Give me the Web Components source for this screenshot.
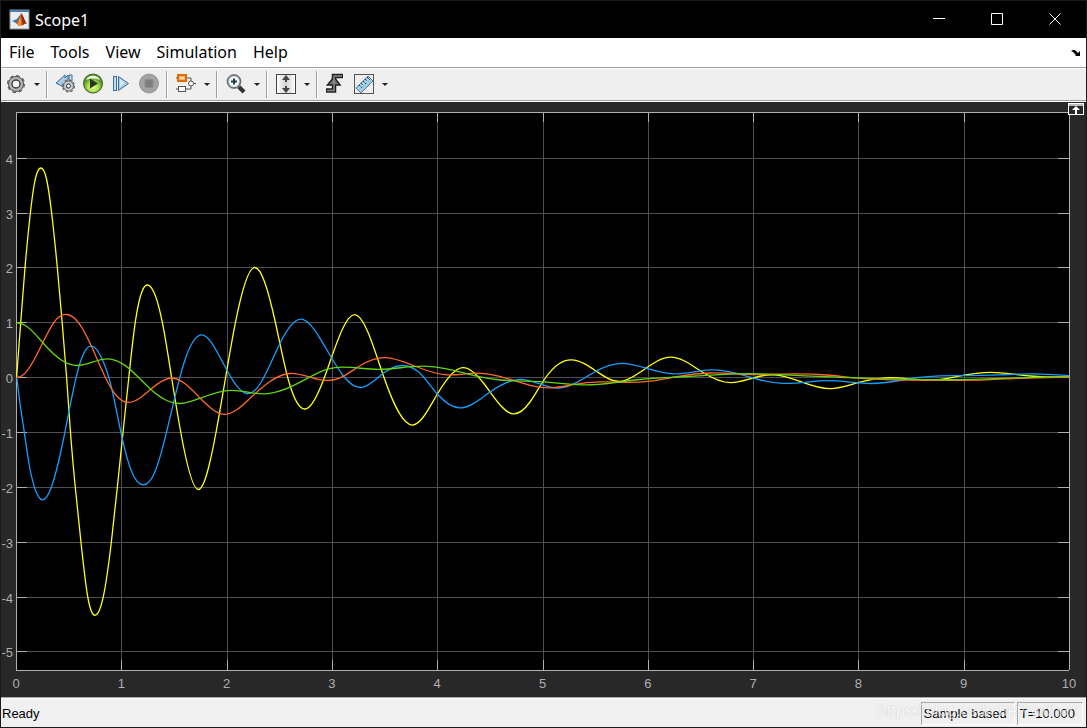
<!DOCTYPE html>
<html lang="en">
<head>
<meta charset="utf-8">
<title>Scope1</title>
<style>
html, body { height: 100%; margin: 0; }
body { background: #1a1a1a; }
</style>
</head>
<body>
<scope-window>
  <title-bar slot="title" label="Scope1"></title-bar>
  <menu-bar slot="menu"></menu-bar>
  <tool-bar slot="tools"></tool-bar>
  <scope-plot></scope-plot>
  <status-bar slot="status">Ready
    <status-cell slot="cells">Sample based</status-cell>
    <status-cell slot="cells">T=10.000</status-cell>
  </status-bar>
</scope-window>

<script>
const define = (name, html, setup) => {
  const template = document.createElement('template');
  template.innerHTML = html;
  customElements.define(name, class extends HTMLElement {
    constructor() {
      super();
      this.attachShadow({ mode: 'open' }).append(template.content.cloneNode(true));
    }
    connectedCallback() { if (setup) setup(this, this.shadowRoot); }
  });
};

const ICONS = {
  matlab: `<rect x="1" y="1" width="19" height="19" fill="#e9edf0" stroke="#8d969c"/><path d="M1 1h19v2H1z" fill="#4b7fae"/>
    <path d="M3 12l5-2 3-4 1 3-3 6-2-1z" fill="#3478a8"/><path d="M7 14l3-4 2-6c2 2 4 9 6 11-2-1-3 0-5 2l-1-1c-1 1-2 1-2 1z" fill="#d9541e"/><path d="M12 4c2 2 4 9 6 11-2-1-3 0-4 1z" fill="#8c2b12"/><path d="M11 8l1 5-1 4-2-2z" fill="#f7a531"/>`,
  gear: `<g fill="none" stroke="#555"><circle cx="11" cy="11" r="7.500" stroke-width="3" stroke-dasharray="3.200 2.690"/><circle cx="11" cy="11" r="6" stroke="#b4b4b4" stroke-width="4"/><circle cx="11" cy="11" r="7.500"/><circle cx="11" cy="11" r="4" stroke="#444" stroke-width="1.500"/></g><circle cx="11" cy="11" r="3" fill="#f5f5f5"/>`,
  back: `<path d="M2 10l9-8v3l3-3v14l-3-3v2z" fill="#a9cbe4" stroke="#3d6c93"/><path d="M15 2h3v8h-3z" fill="#bddcf0" stroke="#3d6c93"/><g fill="none"><circle cx="14.500" cy="13" r="5" stroke="#555" stroke-width="3" stroke-dasharray="2.200 1.700"/><circle cx="14.500" cy="13" r="4" stroke="#ccc" stroke-width="3"/><circle cx="14.500" cy="13" r="5" stroke="#666"/><circle cx="14.500" cy="13" r="2" stroke="#333" fill="#fff"/></g>`,
  play: `<defs><radialGradient id="g" cy=".7"><stop offset="0" stop-color="#e6ff8c"/><stop offset=".6" stop-color="#a5dc4e"/><stop offset="1" stop-color="#5b962c"/></radialGradient></defs><circle cx="11" cy="10.500" r="9.400" fill="url(#g)" stroke="#4d6f34" stroke-width="1.300"/><path d="M4 7a8 8 0 0 1 14 0 14 10 0 0 0-14 0z" fill="#eefadc"/><path d="M8 5.500v10l8-5z" fill="#2e3526"/>`,
  step: `<rect x="3.500" y="3.500" width="3" height="14" fill="#b9dcf1" stroke="#3f6f9a"/><path d="M8.500 3.500v14l10-7z" fill="#a7cde8" stroke="#3f6f9a"/><path d="M10 6v8l5-4z" fill="#d4eaf7"/>`,
  stop: `<circle cx="11" cy="10.500" r="9.500" fill="#a3a3a3" stroke="#979797"/><rect x="7" y="6.500" width="8" height="8" rx="1" fill="#7f7f7f" stroke="#8e8e8e"/>`,
  blocks: `<path d="M10 5h6v3M10 16h6v-3M1 5h2M1 16h2" fill="none" stroke="#555"/><path d="M3 2h8v6H3z" fill="#ffb266" stroke="#e56a05" stroke-width="2"/><path d="M5 4h4v2H5z" fill="#ffe0b5"/><rect x="3.500" y="13.500" width="7" height="5" fill="#fafafa" stroke="#555"/><circle cx="16" cy="10.500" r="2.500" fill="#fff" stroke="#555"/><path d="M19 10.500h2" stroke="#555"/>`,
  zoom: `<path d="M13 13l6 6" stroke="#333" stroke-width="4"/><circle cx="9" cy="8.500" r="6.500" fill="#d5e9ee" stroke="#999" stroke-width="2"/><circle cx="9" cy="8.500" r="6.500" fill="none" stroke="#666"/><circle cx="9" cy="8.500" r="4.500" fill="#f4fbfd"/><path d="M6 8.500h6M9 5.500v6" stroke="#223b4c" stroke-width="2"/>`,
  fit: `<defs><linearGradient id="f" x2="1"><stop stop-color="#fff"/><stop offset=".5" stop-color="#d4d4d4"/><stop offset="1" stop-color="#fff"/></linearGradient></defs><rect x="1.500" y="1.500" width="19" height="19" fill="url(#f)" stroke="#444"/><path d="M7 7l4-5 4 5h-3v2h-2V7zM7 15l4 5 4-5h-3v-2h-2v2z" fill="#444"/>`,
  trigger: `<path d="M2 17.500h8V3h9" fill="none" stroke="#222" stroke-width="4.500"/><path d="M3.500 12L10 4l6 8z" fill="#777" stroke="#222" stroke-width="1.500"/><path d="M3 17.500h7V3h8" fill="none" stroke="#888" stroke-width="1.500"/>`,
  ruler: `<rect x="1.500" y="1.500" width="19" height="19" fill="#eee" stroke="#555"/><path d="M3 15L15 3l5 5L8 20z" fill="#9dcbe4" stroke="#557f9b"/><path d="M8 10l2 2M10 8l3 3M12 6l2 2M14 4l3 3M6 12l3 3" stroke="#28506e"/><path d="M5 16l12-11" stroke="#d7effb" opacity=".6"/>`
};

define('scope-icon', `<style>
  :host { display: block; width: 22px; height: 22px; }
  svg { display: block; width: 100%; height: 100%; }
</style><svg viewBox="0 0 22 22" aria-hidden="true"></svg>`,
(el, root) => { root.querySelector('svg').innerHTML = ICONS[el.getAttribute('name')]; });

define('scope-window', `<style>
  :host { display: flex; flex-direction: column; box-sizing: border-box; height: 100%; border: 1px solid #1a1a1a; background: #282828; }
  .body { flex: 1; min-height: 0; display: flex; }
</style>
<slot name="title"></slot><slot name="menu"></slot><slot name="tools"></slot>
<div class="body"><slot></slot></div>
<slot name="status"></slot>`);

define('title-bar', `<style>
  :host { display: flex; align-items: center; height: 37px; padding-right: 2px; background: #000; color: #fff; font: 16px "Noto Sans", sans-serif; }
  scope-icon { margin: 0 4px 0 8px; }
  h1 { flex: 1; margin: 0; font: inherit; }
  button { width: 58px; height: 37px; padding: 0; border: 0; background: none; display: grid; place-items: center; }
  svg { width: 13px; height: 13px; display: block; fill: none; stroke: #fff; }
</style>
<scope-icon name="matlab"></scope-icon><h1></h1>
<button aria-label="Minimize"><svg viewBox="0 0 13 13"><path d="M0 5.500h12"/></svg></button>
<button aria-label="Maximize"><svg viewBox="0 0 13 13"><path d="M.5.5h11v11H.5z"/></svg></button>
<button aria-label="Close"><svg viewBox="0 0 13 13"><path d="M.5.5l11 11M11.500.5l-11 11"/></svg></button>`,
(el, root) => { root.querySelector('h1').textContent = el.getAttribute('label'); });

define('menu-bar', `<style>
  :host { display: flex; align-items: center; height: 29px; background: #fff; }
  nav { flex: 1; display: flex; }
  button { border: 0; padding: 0 8px; background: none; color: #000; font: 16px/29px "Noto Sans", sans-serif; }
  .dock { padding: 0 5px; display: grid; place-items: center; }
  svg { display: block; width: 10px; height: 8px; }
</style>
<nav><button>File</button><button>Tools</button><button>View</button><button>Simulation</button><button>Help</button></nav>
<button class="dock" aria-label="Dock"><svg viewBox="0 0 10 8"><path d="M0 2l2-1h2l3 3 2-2v5H4l1-1-3-3z"/></svg></button>`);

define('tool-bar', `<style>
  :host { display: flex; align-items: center; height: 32px; background: #efefef; border-top: 1px solid #a0a0a0; border-bottom: 1px solid #a0a0a0; box-shadow: inset 0 1px #fff, 0 1px #fff; margin-bottom: 1px; }
  .group { display: flex; padding: 0 3px; }
  .group:first-of-type { padding-left: 0; }
  .group + .group { border-left: 1px solid #a0a0a0; box-shadow: inset 1px 0 #fff; padding-left: 4px; }
  button { display: grid; place-items: center; width: 28px; height: 27px; padding: 0; border: 0; background: none; }
  button.wide { width: 30px; }
  button.more { width: 12px; }
  .more::before { content: ""; border: 3px solid transparent; border-top-color: #222; border-bottom: 0; }
</style>
<div class="group"><button class="wide" aria-label="Configuration"><scope-icon name="gear"></scope-icon></button><button class="more" aria-label="More configuration"></button></div>
<div class="group"><button aria-label="Step back"><scope-icon name="back"></scope-icon></button><button aria-label="Run"><scope-icon name="play"></scope-icon></button><button aria-label="Step forward"><scope-icon name="step"></scope-icon></button><button aria-label="Stop"><scope-icon name="stop"></scope-icon></button></div>
<div class="group"><button class="wide" aria-label="Highlight block"><scope-icon name="blocks"></scope-icon></button><button class="more" aria-label="More blocks"></button></div>
<div class="group"><button class="wide" aria-label="Zoom"><scope-icon name="zoom"></scope-icon></button><button class="more" aria-label="More zoom"></button></div>
<div class="group"><button class="wide" aria-label="Scale axes"><scope-icon name="fit"></scope-icon></button><button class="more" aria-label="More scaling"></button></div>
<div class="group"><button aria-label="Triggers"><scope-icon name="trigger"></scope-icon></button><button class="wide" aria-label="Measurements"><scope-icon name="ruler"></scope-icon></button><button class="more" aria-label="More measurements"></button></div>`);

/* Samples of each signal on the trace grid. */
const TRACES = [
  ['#ffff11', '16.6,377.5 20.5,325 25,267.5 30.3,213.5 34.3,184 41,168 46.5,179 51.7,213.5 57.3,267.5 62.2,322.7 66.6,377.5 70.5,432.5 75.3,487.5 81,542.5 87.7,596.7 95.4,615.2 103.3,596.7 111.3,542.5 117.3,487.5 123,432.5 128.8,377.5 135.2,322.7 148.8,285.3 162.4,322.7 171.6,377.5 180.8,432.5 198.2,489.5 216,432.5 225.6,377.5 235.4,322.7 254,267.6 275.4,322.5 287.7,377.5 306.1,408.8 324.4,377.5 355.1,314.6 384,377.5 413,425 437.4,394 462.4,367.6 485,385 512.8,413.8 530,402 545.7,377.5 571.7,359.8 596,371 619.5,381.5 640,372.3 670.8,357.2 703,372.5 730.5,382.7 755,377.5 774,374.8 800,381.4 830,388.7 858,382.7 889.5,377.6 932,380.2 963,375.4 990.8,372.4 1017,374.6 1048,376.9 1069,376.5'],
  ['#139fff', '16.8,377.5 20,403.3 24.3,432.3 28.4,460 34.3,486.7 42.8,499.8 51.5,486.7 63.3,440 73.3,390 81,360 91.2,345.8 102.6,360 110,381.7 122,437.3 131.7,471.7 143,484.8 155,471.7 165,438.3 175,396.7 184.3,362 201.8,334.8 221.5,360 247.5,393.7 260,384 280,343.3 301.5,319.2 320,338.3 343,375.5 361,387.5 384,372.8 402.8,365.5 420,373.3 437.3,394 461,407.8 488.3,393.3 520,379.4 542,384.7 558.5,388 576.7,382.4 595,371.7 621,363.3 646.7,368.3 674,373.8 711,369.8 736.7,373.4 756.7,379 783,383.4 828,380.7 871.7,383.5 896.7,381 916.7,377.7 940,375.8 963,375.6 1000,374.8 1033,373.8 1069,375.6'],
  ['#ff6929', '16.6,377.5 22,375.8 34,360 41.7,345 53.3,323.3 66.7,314.5 79,323.3 90.9,345 104,374.5 116.7,396 129.3,402.4 150.7,389.3 172,378 199.3,397.3 225.3,414.4 250,398.3 289.4,373.5 324.4,380.4 343.3,376.3 360,365.7 385.4,357.6 413.3,365.5 446.7,374.8 478.4,373.2 506.7,378.4 530,385.3 552,387.8 573.3,384.6 600,381.9 628,382.4 650,381.2 676.7,376.7 710,373 753,374.5 795,373.9 826.7,375 858,378.1 880,379.4 950,380.3 987,379.8 1017,378.4 1069,377'],
  ['#64d413', '16.6,322.5 25,325.2 43.3,343.3 61.7,360.3 77,365.5 107.7,358.8 125,365.4 150.7,389.3 166.7,400.5 180,403.5 200,398.3 231,390.4 265,393.8 293.3,385.6 308.3,377.9 328.3,368.9 343.3,367.2 378.3,369.3 423.3,366.2 446.7,368.8 476.7,376.2 500,380 540,381.6 585,384.9 613.3,382.9 640,379.5 670,377.4 703,375.7 735,373.9 760,373.8 800,375.7 858,377.9 893,378.9 933,379.7 980,379.2 1017,377.9 1069,376.7']
];

/* Natural cubic spline through the samples, written as Bezier segments. */
function curve(text) {
  const p = text.split(' ').map(s => s.split(',').map(Number));
  const n = p.length - 1;
  const h = [], s = [];
  for (let i = 0; i < n; i++) {
    h[i] = p[i + 1][0] - p[i][0];
    s[i] = (p[i + 1][1] - p[i][1]) / h[i];
  }
  const c = [0.5], r = [1.5 * s[0]];
  for (let i = 1; i <= n; i++) {
    const last = i === n;
    const lower = last ? 1 : h[i];
    const diag = last ? 2 : 2 * (h[i - 1] + h[i]);
    const upper = last ? 0 : h[i - 1];
    const rhs = last ? 3 * s[n - 1] : 3 * (h[i] * s[i - 1] + h[i - 1] * s[i]);
    const w = diag - lower * c[i - 1];
    c[i] = upper / w;
    r[i] = (rhs - lower * r[i - 1]) / w;
  }
  const m = [];
  m[n] = r[n];
  for (let i = n - 1; i >= 0; i--) m[i] = r[i] - c[i] * m[i + 1];
  let d = `M${p[0]}`;
  for (let i = 0; i < n; i++) {
    const k = h[i] / 3;
    d += `C${p[i][0] + k},${p[i][1] + m[i] * k} ${p[i + 1][0] - k},${p[i + 1][1] - m[i + 1] * k} ${p[i + 1]}`;
  }
  return d;
}

define('scope-plot', `<style>
  :host { flex: 1; display: flex; position: relative; box-sizing: border-box; padding: 10px 17px 27px 15px; background: #282828; }
  .chart { flex: 1; min-width: 0; width: 100%; height: 100%; overflow: visible; display: block; font: 13px "Liberation Sans", Arial, sans-serif; }
  .grid { fill: #505050; }
  .axis { fill: #afafaf; }
  .grid rect, .axis rect { shape-rendering: crispEdges; }
  .traces path { fill: none; stroke-width: 1.3px; vector-effect: non-scaling-stroke; }
  button { position: absolute; top: 1px; right: 2px; width: 16px; height: 12px; padding: 0; border: 1px solid #fff; background: #282828; }
  button svg { display: block; width: 14px; height: 10px; }
</style>
<svg class="chart" role="img" aria-label="Signals over ten seconds">
  <rect width="100%" height="100%"/>
  <g class="grid"></g><g class="axis"></g>
  <svg class="traces" viewBox="16 112 1053 558" preserveAspectRatio="none" width="100%" height="100%"></svg>
</svg>
<button aria-label="Maximize axes"><svg viewBox="0 0 14 10"><path d="M0 0h14v2H0z" fill="#bbb"/><path d="M3 6l4-4 4 4H8v4H6V6z" fill="#fff"/></svg></button>`,
(el, root) => {
  const bar = (x, y, w, h, shift = '0 0') => `<rect x="${x}" y="${y}" width="${w}" height="${h}" transform="translate(${shift})"/>`;
  let grid = '', axis = '';
  for (let t = 0; t <= 10; t++) {
    const x = t * 10 + '%';
    if (t && t < 10) {
      grid += bar(x, 0, 1, '100%');
      axis += bar(x, 0, 1, 10) + bar(x, '100%', 1, 10, '0 -10');
    }
    axis += `<text x="${x}" y="100%" dy="18" text-anchor="middle">${t}</text>`;
  }
  for (let v = -5; v <= 4; v++) {
    const y = 47.52 - 9.83 * v + '%';
    grid += bar(0, y, '100%', 1);
    axis += bar(0, y, 11, 1) + bar('100%', y, 11, 1, '-11 0');
    axis += `<text x="0" y="${y}" dx="-3" dy="6" text-anchor="end">${v}</text>`;
  }
  axis += bar(0, 0, '100%', 1) + bar(0, '100%', '100%', 1) + bar(0, 0, 1, '100%') + bar('100%', 0, 1, '100%');
  root.querySelector('.grid').innerHTML = grid;
  root.querySelector('.axis').innerHTML = axis;
  root.querySelector('.traces').innerHTML = TRACES.map(([c, s]) => `<path stroke="${c}" d="${curve(s)}"/>`).join('');
});

define('status-bar', `<style>
  :host { display: flex; position: relative; box-sizing: border-box; height: 30px; padding: 4px 3px 1px 1px; border-top: 1px solid #aaa2a2; background: #f0f0f0; box-shadow: inset 0 1px #fff; color: #000; font: 13px/23px "Liberation Sans", Arial, sans-serif; }
  .message { flex: 1; }
  .cells { display: flex; gap: 2px; }
  .mark { position: absolute; right: 8px; top: 0; color: #fff; opacity: .6; text-shadow: 0 0 1px #999; font: 16px/26px "Liberation Sans", Arial, sans-serif; pointer-events: none; }
</style>
<span class="message"><slot></slot></span><span class="cells"><slot name="cells"></slot></span>
<span class="mark">https://blog.csdn.net/rwdhan</span>`);

define('status-cell', `<style>
  :host { display: block; box-sizing: border-box; height: 23px; padding: 0 7px 0 2px; line-height: 21px; border: 1px solid #fff; border-top-color: #a8a8a8; border-left-color: #a8a8a8; white-space: nowrap; }
</style><slot></slot>`);
</script>
</body>
</html>
